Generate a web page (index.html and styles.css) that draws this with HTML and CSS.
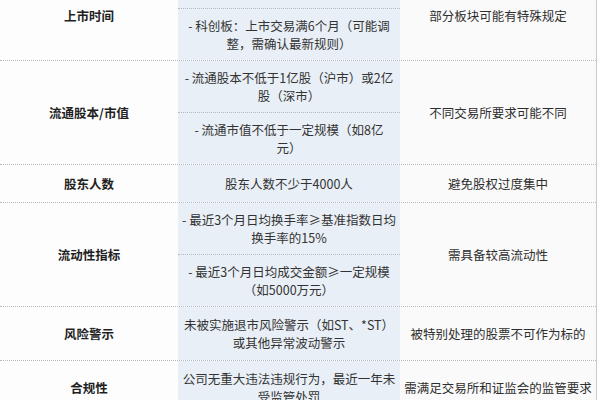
FILE: index.html
```html
<!DOCTYPE html>
<html lang="zh-CN">
<head>
<meta charset="utf-8">
<link rel="stylesheet" href="styles.css">
</head>
<body>
<div class="table">
  <div class="row">
    <div class="cell label">上市时间</div>
    <div class="cell mid">
      <div class="sub sub-top"></div>
      <div class="sub">- 科创板：上市交易满6个月（可能调<br>整，需确认最新规则）</div>
    </div>
    <div class="cell note">部分板块可能有特殊规定</div>
  </div>
  <div class="row">
    <div class="cell label">流通股本/市值</div>
    <div class="cell mid">
      <div class="sub">- 流通股本不低于1亿股（沪市）或2亿<br>股（深市）</div>
      <div class="sub">- 流通市值不低于一定规模（如8亿<br>元）</div>
    </div>
    <div class="cell note">不同交易所要求可能不同</div>
  </div>
  <div class="row">
    <div class="cell label">股东人数</div>
    <div class="cell mid"><div class="single">股东人数不少于4000人</div></div>
    <div class="cell note">避免股权过度集中</div>
  </div>
  <div class="row">
    <div class="cell label">流动性指标</div>
    <div class="cell mid">
      <div class="sub">- 最近3个月日均换手率≥基准指数日均<br>换手率的15%</div>
      <div class="sub">- 最近3个月日均成交金额≥一定规模<br>（如5000万元）</div>
    </div>
    <div class="cell note">需具备较高流动性</div>
  </div>
  <div class="row">
    <div class="cell label">风险警示</div>
    <div class="cell mid"><div class="full">未被实施退市风险警示（如ST、*ST）<br>或其他异常波动警示</div></div>
    <div class="cell note">被特别处理的股票不可作为标的</div>
  </div>
  <div class="row">
    <div class="cell label">合规性</div>
    <div class="cell mid"><div class="full">公司无重大违法违规行为，最近一年未<br>受监管处罚</div></div>
    <div class="cell note">需满足交易所和证监会的监管要求</div>
  </div>
</div>
</body>
</html>
```

FILE: styles.css
```css
html, body {
  margin: 0;
  padding: 0;
  background: #ffffff;
  overflow: hidden;
}

body {
  font-family: "Noto Sans CJK SC", "Noto Sans", sans-serif;
  font-size: 12.5px;
  line-height: 18px;
  color: #333333;
}

.table {
  width: 596px;
  margin-top: -28px;
  border-right: 1px solid #c6cbd1;
}

.row {
  display: grid;
  grid-template-columns: 178px 222px 196px;
  border-bottom: 1px dotted #b3b9c0;
}

.cell {
  display: flex;
  align-items: center;
  justify-content: center;
  text-align: center;
}

.label {
  background: #fdfdfd;
  font-weight: 700;
  color: #1f1f1f;
}

.note {
  background: #fafafa;
  color: #2e2e2e;
}

.mid {
  background: #e9eff6;
  flex-direction: column;
  align-items: stretch;
}

.sub {
  padding: 8px 4px 7px;
  border-top: 1px dotted #b3b9c0;
  white-space: nowrap;
}

.sub:first-child {
  border-top: none;
}

.sub-top {
  height: 36px;
  padding: 0;
}

.full {
  padding: 9px 4px 8px;
  white-space: nowrap;
}

.single {
  padding: 10px 4px 9px;
  white-space: nowrap;
}
```
